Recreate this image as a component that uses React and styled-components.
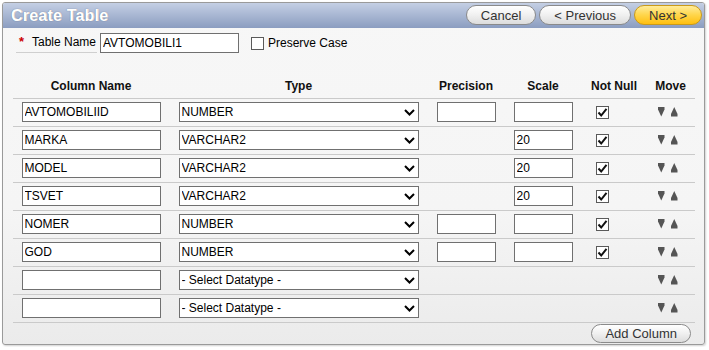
import React from 'react'
import styled, { createGlobalStyle, css } from 'styled-components'

const GlobalStyle = createGlobalStyle`
  body {
    margin: 0;
    background: #fff;
    font-family: 'Liberation Sans', Arial, sans-serif;
  }
`

const columns = [
  { name: 'AVTOMOBILIID', type: 'NUMBER', precision: '', scale: '', numeric: true, notNull: true },
  { name: 'MARKA', type: 'VARCHAR2', scale: '20', notNull: true },
  { name: 'MODEL', type: 'VARCHAR2', scale: '20', notNull: true },
  { name: 'TSVET', type: 'VARCHAR2', scale: '20', notNull: true },
  { name: 'NOMER', type: 'NUMBER', precision: '', scale: '', numeric: true, notNull: true },
  { name: 'GOD', type: 'NUMBER', precision: '', scale: '', numeric: true, notNull: true },
  { name: '', type: '- Select Datatype -', empty: true },
  { name: '', type: '- Select Datatype -', empty: true },
]

const Chevron = () => (
  <svg width="11" height="7" viewBox="0 0 11 7">
    <polyline points="1,1 5.5,5.5 10,1" fill="none" stroke="#000" strokeWidth="2" />
  </svg>
)

const Check = () => (
  <svg width="11" height="11" viewBox="0 0 11 11">
    <polyline points="1.5,5.5 4.2,8.5 9.5,1.8" fill="none" stroke="#111" strokeWidth="2" />
  </svg>
)

const MoveArrows = () => (
  <svg width="20" height="10" viewBox="0 0 20 10">
    <polygon points="0,0 6.5,0 6.5,2.5 3.25,9.5 0,2.5" fill="#555" />
    <polygon points="13,9.5 19.5,9.5 19.5,7 16.25,0 13,7" fill="#555" />
  </svg>
)

const App = () => {
  return <>
    <GlobalStyle />
    <Panel>
      <TitleBar>
        <Title>Create Table</Title>
        <Buttons>
          <PillButton>Cancel</PillButton>
          <PillButton>&lt; Previous</PillButton>
          <PillButton $hot>Next &gt;</PillButton>
        </Buttons>
      </TitleBar>
      <Body>
        <NameRow>
          <Label><Req>*</Req>Table Name</Label>
          <TextInput $w={139} defaultValue="AVTOMOBILI1" />
          <CheckLabel><CheckBox />Preserve Case</CheckLabel>
        </NameRow>
        <Grid>
          <Head>Column Name</Head>
          <Head>Type</Head>
          <Head>Precision</Head>
          <Head>Scale</Head>
          <Head>Not Null</Head>
          <Head>Move</Head>
          {columns.map((c, i) => (
            <React.Fragment key={i}>
              <Cell $center><TextInput $w={139} defaultValue={c.name} /></Cell>
              <Cell $center>
                <SelectWrap>
                  <Select defaultValue={c.type}><option>{c.type}</option></Select>
                  <ChevronSpot><Chevron /></ChevronSpot>
                </SelectWrap>
              </Cell>
              <Cell $center>{c.numeric && <TextInput $w={59} defaultValue={c.precision} />}</Cell>
              <Cell $center>{!c.empty && <TextInput $w={59} defaultValue={c.scale} />}</Cell>
              <Cell $pad={14}>{c.notNull && <CheckBox><Check /></CheckBox>}</Cell>
              <Cell $pad={12}><MoveArrows /></Cell>
            </React.Fragment>
          ))}
        </Grid>
        <Footer>
          <PillButton $small>Add Column</PillButton>
        </Footer>
      </Body>
    </Panel>
  </>
}

const Panel = styled.div`
  margin: 2px;
  width: 703px;
  height: 343px;
  box-sizing: border-box;
  border: 1px solid #9a9a9a;
  border-radius: 3px;
  box-shadow: 1px 1px 2px rgba(0, 0, 0, 0.18);
  display: flex;
  flex-direction: column;
  overflow: hidden;
  background: linear-gradient(#f7f7f7 0%, #f5f5f5 60%, #ebebeb 100%);
`

const TitleBar = styled.div`
  height: 25px;
  display: flex;
  align-items: flex-start;
  justify-content: space-between;
  padding: 0 2px 0 8px;
  background: linear-gradient(#c4cfe4, #8b9dc0);
`

const Title = styled.h1`
  margin: 0;
  font-size: 16px;
  line-height: 25px;
  font-weight: bold;
  color: #fff;
  text-shadow: 0 0 1px rgba(40, 50, 80, 0.7), 0.4px 0 0 #fff;
  letter-spacing: 0.2px;
`

const Buttons = styled.div`
  display: flex;
  gap: 3px;
  padding-top: 2px;
`

const PillButton = styled.button`
  height: ${p => (p.$small ? 19 : 20)}px;
  padding: 0 ${p => (p.$small ? 13 : 14)}px;
  border-radius: 10px;
  border: 1px solid #8a8a8a;
  font-family: 'Liberation Sans', Arial, sans-serif;
  font-size: 13px;
  line-height: 1;
  color: #333;
  background: linear-gradient(#ffffff, #f0f0f0 50%, #dcdcdc);
  cursor: pointer;
  ${p => p.$hot && css`
    border-color: #c99a1a;
    background: linear-gradient(#ffec99, #ffd54a 50%, #ffbf10);
  `}
`

const Body = styled.div`
  flex: 1;
  padding: 3px 9px 0 10px;
  display: flex;
  flex-direction: column;
`

const NameRow = styled.div`
  display: flex;
  align-items: flex-end;
  margin-left: 3px;
  height: 22px;
  font-size: 12px;
`

const Label = styled.label`
  display: flex;
  align-items: center;
  width: 81px;
  box-sizing: border-box;
  padding: 0 0 3px 3px;
  border-bottom: 1px solid #cfcfcf;
  margin-right: 3px;
  color: #000;
`

const Req = styled.span`
  color: #c00;
  font-weight: bold;
  font-size: 13px;
  width: 13px;
  line-height: 10px;
`

const CheckLabel = styled.label`
  display: flex;
  align-items: center;
  gap: 4px;
  margin-left: 12px;
  padding-bottom: 3px;
  color: #000;
`

const CheckBox = styled.span`
  width: 13px;
  height: 13px;
  box-sizing: border-box;
  border: 1px solid #5a5a5a;
  background: #fff;
  display: inline-flex;
  align-items: center;
  justify-content: center;
`

const TextInput = styled.input`
  width: ${p => p.$w}px;
  height: 20px;
  box-sizing: border-box;
  border: 1px solid #707070;
  padding: 0 2px;
  font-family: 'Liberation Sans', Arial, sans-serif;
  font-size: 12px;
  color: #000;
  background: #fff;
  outline: none;
`

const Grid = styled.div`
  display: grid;
  grid-template-columns: 156px 259px 76px 78px 64px 49px;
  grid-template-rows: 46px;
  grid-auto-rows: 28px;
  & > * {
    border-bottom: 1px solid #cacaca;
  }
`

const Head = styled.div`
  box-sizing: border-box;
  display: flex;
  align-items: flex-end;
  justify-content: center;
  padding-bottom: 5px;
  font-size: 12px;
  font-weight: bold;
  line-height: 14px;
  color: #111;
`

const Cell = styled.div`
  box-sizing: border-box;
  display: flex;
  align-items: center;
  padding-bottom: 1px;
  justify-content: ${p => (p.$center ? 'center' : 'flex-start')};
  padding-left: ${p => p.$pad || 0}px;
`

const SelectWrap = styled.div`
  position: relative;
  width: 240px;
  height: 20px;
`

const Select = styled.select`
  appearance: none;
  width: 100%;
  height: 20px;
  box-sizing: border-box;
  border: 1px solid #707070;
  border-radius: 0;
  padding: 0 0 0 2px;
  font-family: 'Liberation Sans', Arial, sans-serif;
  font-size: 12px;
  color: #000;
  background: #fff;
  outline: none;
`

const ChevronSpot = styled.span`
  position: absolute;
  right: 4px;
  top: 7px;
  display: flex;
  pointer-events: none;
`

const Footer = styled.div`
  display: flex;
  justify-content: flex-end;
  padding: 1px 4px 0 0;
`

export default App
